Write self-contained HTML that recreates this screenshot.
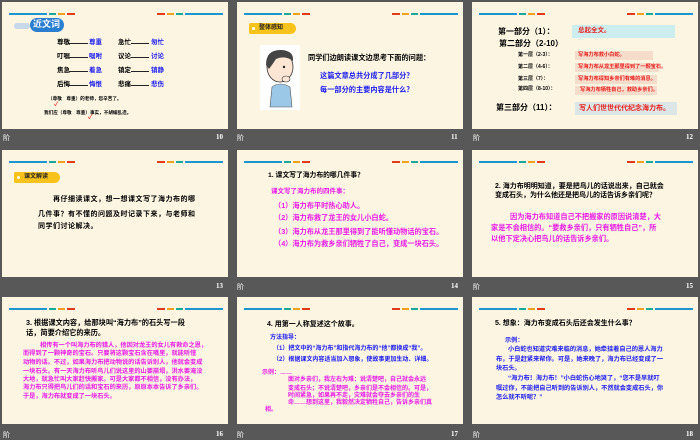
<!DOCTYPE html>
<html><head><meta charset="utf-8"><style>
*{margin:0;padding:0;box-sizing:border-box}
body{width:700px;height:438px;background:#585858;position:relative;overflow:hidden;font-family:"Liberation Sans","Noto Sans CJK SC",sans-serif}
.s{position:absolute;width:226px;height:127px;background:#fbf5e2;overflow:hidden}
.t{position:absolute;white-space:nowrap;font-weight:bold;line-height:1}
.l{position:absolute;height:1.6px;top:11px}
.n{position:absolute;color:#fff;font:bold 7px "Liberation Serif",serif}
.k{color:#1c1cf0}.m{color:#e81ae8}.r{color:#e82020}
.box{position:absolute}
.tag{position:absolute;background:#f7c21a;border-radius:2px 6px 6px 2px;font-size:6px;font-weight:bold;color:#222;padding-left:10px;line-height:11px}
.tag:before{content:"";position:absolute;left:3px;top:4px;width:3px;height:3px;border-radius:50%;background:#fff}
</style></head><body>

<!-- decorative lines template via repeated markup -->
<!-- Slide 10 -->
<div class="s" style="left:2px;top:2px">
<div class="l" style="left:7px;width:38px;background:#1d96d0"></div><div class="l" style="left:47px;width:7px;background:#1aa89a"></div><div class="l" style="left:56px;width:7px;background:#f0a020"></div><div class="l" style="left:65px;width:8px;background:#e03a1a"></div>
<div class="l" style="left:155px;width:8px;background:#e03a1a"></div><div class="l" style="left:165px;width:7px;background:#f0a020"></div><div class="l" style="left:174px;width:7px;background:#1aa89a"></div><div class="l" style="left:183px;width:38px;background:#1d96d0"></div>
<div class="box" style="left:12px;top:21px;width:16px;height:6px;background:#c8d8e8;border-radius:4px"></div>
<div class="box" style="left:28px;top:16px;width:34px;height:14px;background:#2a7ed0;border-radius:7px"></div>
<div class="t" style="left:31px;top:18px;font-size:9px;color:#fff">近文词</div>
<div class="t" style="left:55px;top:38px;font-size:6.5px">尊敬</div><div class="box" style="left:67px;top:41px;width:19px;height:0.8px;background:#222"></div><div class="t k" style="left:87px;top:38px;font-size:6.5px">尊重</div>
<div class="t" style="left:116px;top:38px;font-size:6.5px">急忙</div><div class="box" style="left:129px;top:41px;width:18px;height:0.8px;background:#222"></div><div class="t k" style="left:149px;top:38px;font-size:6.5px">匆忙</div>
<div class="t" style="left:55px;top:52px;font-size:6.5px">叮嘱</div><div class="box" style="left:67px;top:55px;width:19px;height:0.8px;background:#222"></div><div class="t k" style="left:87px;top:52px;font-size:6.5px">嘱咐</div>
<div class="t" style="left:116px;top:52px;font-size:6.5px">议论</div><div class="box" style="left:129px;top:55px;width:18px;height:0.8px;background:#222"></div><div class="t k" style="left:149px;top:52px;font-size:6.5px">讨论</div>
<div class="t" style="left:55px;top:66px;font-size:6.5px">焦急</div><div class="box" style="left:67px;top:69px;width:19px;height:0.8px;background:#222"></div><div class="t k" style="left:87px;top:66px;font-size:6.5px">着急</div>
<div class="t" style="left:116px;top:66px;font-size:6.5px">镇定</div><div class="box" style="left:129px;top:69px;width:18px;height:0.8px;background:#222"></div><div class="t k" style="left:149px;top:66px;font-size:6.5px">镇静</div>
<div class="t" style="left:55px;top:80px;font-size:6.5px">后悔</div><div class="box" style="left:67px;top:83px;width:19px;height:0.8px;background:#222"></div><div class="t k" style="left:87px;top:80px;font-size:6.5px">悔恨</div>
<div class="t" style="left:116px;top:80px;font-size:6.5px">悲痛</div><div class="box" style="left:129px;top:83px;width:18px;height:0.8px;background:#222"></div><div class="t k" style="left:149px;top:80px;font-size:6.5px">悲伤</div>
<div class="t" style="left:46px;top:95px;font-size:4.6px">（尊敬　尊重）的老师，您辛苦了。</div>
<div class="t" style="left:42px;top:109px;font-size:4.6px">我们应（尊敬　尊重）事实，不胡编乱造。</div>
<div class="t r" style="left:52px;top:100px;font-size:6px">✓</div><div class="t r" style="left:86px;top:113px;font-size:6px">✓</div>
</div>
<div class="n" style="left:3px;top:133px;font-weight:normal">阶</div><div class="n" style="left:216px;top:133px">10</div>

<!-- Slide 11 -->
<div class="s" style="left:237px;top:2px">
<div class="l" style="left:7px;width:38px;background:#1d96d0"></div><div class="l" style="left:47px;width:7px;background:#1aa89a"></div><div class="l" style="left:56px;width:7px;background:#f0a020"></div><div class="l" style="left:65px;width:8px;background:#e03a1a"></div>
<div class="l" style="left:155px;width:8px;background:#e03a1a"></div><div class="l" style="left:165px;width:7px;background:#f0a020"></div><div class="l" style="left:174px;width:7px;background:#1aa89a"></div><div class="l" style="left:183px;width:38px;background:#1d96d0"></div>
<div class="tag" style="left:12px;top:21px;width:47px;height:11px">整体感知</div>
<svg class="box" style="left:23px;top:43px" width="40" height="65" viewBox="0 0 40 65"><rect width="40" height="65" fill="#fff"/><ellipse cx="20" cy="22" rx="13" ry="15" fill="#fde7d4" stroke="#333" stroke-width=".8"/><path d="M6 20 Q6 4 22 5 Q34 6 33 16 Q25 10 16 14 Q12 20 9 24Z" fill="#444"/><circle cx="24" cy="22" r="1.2" fill="#222"/><path d="M10 62 L12 42 Q20 36 30 42 L32 62Z" fill="#9cc8e8" stroke="#555" stroke-width=".6"/><ellipse cx="26" cy="34" rx="4" ry="3" fill="#fde7d4" stroke="#333" stroke-width=".6"/></svg>
<div class="t" style="left:71px;top:52px;font-size:7.2px">同学们边朗读课文边思考下面的问题：</div>
<div class="t k" style="left:83px;top:70px;font-size:7.2px">这篇文章总共分成了几部分？</div>
<div class="t k" style="left:83px;top:84px;font-size:7.2px">每一部分的主要内容是什么？</div>
</div>
<div class="n" style="left:237px;top:133px;font-weight:normal">阶</div><div class="n" style="left:451px;top:133px">11</div>

<!-- Slide 12 -->
<div class="s" style="left:472px;top:2px">
<div class="l" style="left:7px;width:38px;background:#1d96d0"></div><div class="l" style="left:47px;width:7px;background:#1aa89a"></div><div class="l" style="left:56px;width:7px;background:#f0a020"></div><div class="l" style="left:65px;width:8px;background:#e03a1a"></div>
<div class="l" style="left:155px;width:8px;background:#e03a1a"></div><div class="l" style="left:165px;width:7px;background:#f0a020"></div><div class="l" style="left:174px;width:7px;background:#1aa89a"></div><div class="l" style="left:183px;width:38px;background:#1d96d0"></div>
<div class="t" style="left:26px;top:26px;font-size:8px">第一部分（1）：</div>
<div class="box" style="left:100px;top:23px;width:103px;height:13px;background:#cdeeee"></div>
<div class="t r" style="left:106px;top:26px;font-size:6.5px">总起全文。</div>
<div class="t" style="left:27px;top:38px;font-size:8px">第二部分（2-10）</div>
<div class="t" style="left:46px;top:51px;font-size:5px">第一层（2-3）：</div><div class="box" style="left:103px;top:49px;width:78px;height:9px;background:#f6dccb"></div><div class="t r" style="left:106px;top:51px;font-size:5.2px">写海力布救小白蛇。</div>
<div class="t" style="left:46px;top:63px;font-size:5px">第二层（4-6）：</div><div class="box" style="left:103px;top:61px;width:84px;height:9px;background:#f6dccb"></div><div class="t r" style="left:106px;top:63px;font-size:5.2px">写海力布从龙王那里得到了一颗宝石。</div>
<div class="t" style="left:46px;top:75px;font-size:5px">第三层（7）：</div><div class="box" style="left:103px;top:73px;width:82px;height:9px;background:#f6dccb"></div><div class="t r" style="left:106px;top:75px;font-size:5.2px">写海力布得知乡亲们有难的消息。</div>
<div class="t" style="left:46px;top:85px;font-size:5px">第四层（8-10）：</div><div class="box" style="left:103px;top:84px;width:82px;height:9px;background:#f6dccb"></div><div class="t r" style="left:108px;top:86px;font-size:5.2px">写海力布牺牲自己，救助乡亲们。</div>
<div class="t" style="left:24px;top:102px;font-size:8px">第三部分（11）：</div>
<div class="box" style="left:103px;top:100px;width:102px;height:13px;background:#dde6e6"></div>
<div class="t r" style="left:107px;top:103px;font-size:7px">写人们世世代代纪念海力布。</div>
</div>
<div class="n" style="left:473px;top:133px;font-weight:normal">阶</div><div class="n" style="left:686px;top:133px">12</div>

<!-- Slide 13 -->
<div class="s" style="left:2px;top:150px">
<div class="l" style="left:7px;width:38px;background:#1d96d0"></div><div class="l" style="left:47px;width:7px;background:#1aa89a"></div><div class="l" style="left:56px;width:7px;background:#f0a020"></div><div class="l" style="left:65px;width:8px;background:#e03a1a"></div>
<div class="l" style="left:155px;width:8px;background:#e03a1a"></div><div class="l" style="left:165px;width:7px;background:#f0a020"></div><div class="l" style="left:174px;width:7px;background:#1aa89a"></div><div class="l" style="left:183px;width:38px;background:#1d96d0"></div>
<div class="tag" style="left:12px;top:22px;width:46px;height:11px">课文解读</div>
<div class="t" style="left:51px;top:46px;font-size:7px;letter-spacing:.5px">再仔细读课文，想一想课文写了海力布的哪</div>
<div class="t" style="left:36px;top:61px;font-size:7px;letter-spacing:.5px">几件事？有不懂的问题及时记录下来，与老师和</div>
<div class="t" style="left:36px;top:73px;font-size:7px;letter-spacing:.5px">同学们讨论解决。</div>
</div>
<div class="n" style="left:216px;top:282px">13</div>

<!-- Slide 14 -->
<div class="s" style="left:237px;top:150px">
<div class="l" style="left:7px;width:38px;background:#1d96d0"></div><div class="l" style="left:47px;width:7px;background:#1aa89a"></div><div class="l" style="left:56px;width:7px;background:#f0a020"></div><div class="l" style="left:65px;width:8px;background:#e03a1a"></div>
<div class="l" style="left:155px;width:8px;background:#e03a1a"></div><div class="l" style="left:165px;width:7px;background:#f0a020"></div><div class="l" style="left:174px;width:7px;background:#1aa89a"></div><div class="l" style="left:183px;width:38px;background:#1d96d0"></div>
<div class="t" style="left:31px;top:23px;font-size:6.8px">1. 课文写了海力布的哪几件事？</div>
<div class="t m" style="left:34px;top:39px;font-size:6.5px">课文写了海力布的四件事：</div>
<div class="t m" style="left:37px;top:52px;font-size:7.2px">（1）海力布平时热心助人。</div>
<div class="t m" style="left:37px;top:64px;font-size:7.2px">（2）海力布救了龙王的女儿小白蛇。</div>
<div class="t m" style="left:37px;top:78px;font-size:7.2px">（3）海力布从龙王那里得到了能听懂动物话的宝石。</div>
<div class="t m" style="left:37px;top:90px;font-size:7.2px">（4）海力布为救乡亲们牺牲了自己，变成一块石头。</div>
</div>
<div class="n" style="left:237px;top:282px;font-weight:normal">阶</div><div class="n" style="left:451px;top:282px">14</div>

<!-- Slide 15 -->
<div class="s" style="left:472px;top:150px">
<div class="l" style="left:7px;width:38px;background:#1d96d0"></div><div class="l" style="left:47px;width:7px;background:#1aa89a"></div><div class="l" style="left:56px;width:7px;background:#f0a020"></div><div class="l" style="left:65px;width:8px;background:#e03a1a"></div>
<div class="l" style="left:155px;width:8px;background:#e03a1a"></div><div class="l" style="left:165px;width:7px;background:#f0a020"></div><div class="l" style="left:174px;width:7px;background:#1aa89a"></div><div class="l" style="left:183px;width:38px;background:#1d96d0"></div>
<div class="t" style="left:23px;top:33px;font-size:7px">2. 海力布明明知道，要是把鸟儿的话说出来，自己就会</div>
<div class="t" style="left:23px;top:42px;font-size:7px">变成石头，为什么他还是把鸟儿的话告诉乡亲们呢？</div>
<div class="t m" style="left:38px;top:63px;font-size:7.2px">因为海力布知道自己不把搬家的原因说清楚，大</div>
<div class="t m" style="left:19px;top:74px;font-size:7.2px">家是不会相信的。“要救乡亲们，只有牺牲自己”，所</div>
<div class="t m" style="left:19px;top:85px;font-size:7.2px">以他下定决心把鸟儿的话告诉乡亲们。</div>
</div>
<div class="n" style="left:473px;top:282px;font-weight:normal">阶</div><div class="n" style="left:686px;top:282px">15</div>

<!-- Slide 16 -->
<div class="s" style="left:2px;top:297px">
<div class="l" style="left:7px;width:38px;background:#1d96d0"></div><div class="l" style="left:47px;width:7px;background:#1aa89a"></div><div class="l" style="left:56px;width:7px;background:#f0a020"></div><div class="l" style="left:65px;width:8px;background:#e03a1a"></div>
<div class="l" style="left:155px;width:8px;background:#e03a1a"></div><div class="l" style="left:165px;width:7px;background:#f0a020"></div><div class="l" style="left:174px;width:7px;background:#1aa89a"></div><div class="l" style="left:183px;width:38px;background:#1d96d0"></div>
<div class="t" style="left:24px;top:22px;font-size:7.2px">3. 根据课文内容，给那块叫“海力布”的石头写一段</div>
<div class="t" style="left:24px;top:32px;font-size:7.2px">话，简要介绍它的来历。</div>
<div class="t m" style="left:38px;top:46px;font-size:6.2px">相传有一个叫海力布的猎人，他因对龙王的女儿有救命之恩，</div>
<div class="t m" style="left:21px;top:54px;font-size:6.2px">而得到了一颗神奇的宝石。只要将这颗宝石含在嘴里，就能听懂</div>
<div class="t m" style="left:21px;top:63px;font-size:6.2px">动物的话。不过，如果海力布把动物说的话告诉别人，他就会变成</div>
<div class="t m" style="left:21px;top:72px;font-size:6.2px">一块石头。有一天海力布听鸟儿们说这里的山要崩塌，洪水要淹没</div>
<div class="t m" style="left:21px;top:80px;font-size:6.2px">大地，就急忙叫大家赶快搬家。可是大家都不相信，没有办法，</div>
<div class="t m" style="left:21px;top:88px;font-size:6.2px">海力布只得把鸟儿们的话和宝石的来历，原原本本告诉了乡亲们。</div>
<div class="t m" style="left:21px;top:97px;font-size:6.2px">于是，海力布就变成了一块石头。</div>
</div>
<div class="n" style="left:3px;top:430px;font-weight:normal">阶</div><div class="n" style="left:216px;top:430px">16</div>

<!-- Slide 17 -->
<div class="s" style="left:237px;top:297px">
<div class="l" style="left:7px;width:38px;background:#1d96d0"></div><div class="l" style="left:47px;width:7px;background:#1aa89a"></div><div class="l" style="left:56px;width:7px;background:#f0a020"></div><div class="l" style="left:65px;width:8px;background:#e03a1a"></div>
<div class="l" style="left:155px;width:8px;background:#e03a1a"></div><div class="l" style="left:165px;width:7px;background:#f0a020"></div><div class="l" style="left:174px;width:7px;background:#1aa89a"></div><div class="l" style="left:183px;width:38px;background:#1d96d0"></div>
<div class="t" style="left:30px;top:24px;font-size:7px">4. 用第一人称复述这个故事。</div>
<div class="t k" style="left:33px;top:38px;font-size:6px">方法指导：</div>
<div class="t k" style="left:36px;top:49px;font-size:6px">（1）把文中的“海力布”和指代海力布的“他”都换成“我”。</div>
<div class="t k" style="left:36px;top:60px;font-size:6px">（2）根据课文内容适当加入想象，使故事更加生动、详细。</div>
<div class="t m" style="left:25px;top:73px;font-size:6px">示例：……</div>
<div class="t m" style="left:51px;top:80px;font-size:6px">面对乡亲们，我左右为难：说清楚吧，自己就会永远</div>
<div class="t m" style="left:51px;top:89px;font-size:6px">变成石头；不说清楚吧，乡亲们是不会相信的。可是，</div>
<div class="t m" style="left:51px;top:96px;font-size:6px">时间紧急，如果再不走，灾难就会夺去乡亲们的生</div>
<div class="t m" style="left:51px;top:103px;font-size:6px">命……想到这里，我毅然决定牺牲自己，告诉乡亲们真</div>
<div class="t m" style="left:28px;top:110px;font-size:6px">相。</div>
</div>
<div class="n" style="left:237px;top:430px;font-weight:normal">阶</div><div class="n" style="left:451px;top:430px">17</div>

<!-- Slide 18 -->
<div class="s" style="left:472px;top:297px">
<div class="l" style="left:7px;width:38px;background:#1d96d0"></div><div class="l" style="left:47px;width:7px;background:#1aa89a"></div><div class="l" style="left:56px;width:7px;background:#f0a020"></div><div class="l" style="left:65px;width:8px;background:#e03a1a"></div>
<div class="l" style="left:155px;width:8px;background:#e03a1a"></div><div class="l" style="left:165px;width:7px;background:#f0a020"></div><div class="l" style="left:174px;width:7px;background:#1aa89a"></div><div class="l" style="left:183px;width:38px;background:#1d96d0"></div>
<div class="t" style="left:23px;top:23px;font-size:7px">5. 想象：海力布变成石头后还会发生什么事？</div>
<div class="t k" style="left:33px;top:41px;font-size:6.2px">示例：</div>
<div class="t k" style="left:36px;top:50px;font-size:6.2px">小白蛇也知道灾难来临的消息，她牵挂着自己的恩人海力</div>
<div class="t k" style="left:24px;top:60px;font-size:6.2px">布，于是赶紧来帮你。可是，她来晚了，海力布已经变成了一</div>
<div class="t k" style="left:24px;top:69px;font-size:6.2px">块石头。</div>
<div class="t k" style="left:36px;top:79px;font-size:6.2px">“海力布！海力布！”小白蛇伤心地哭了，“您不是早就叮</div>
<div class="t k" style="left:24px;top:89px;font-size:6.2px">嘱过你，不能把自己听到的告诉别人，不然就会变成石头，你</div>
<div class="t k" style="left:24px;top:98px;font-size:6.2px">怎么就不听呢？”</div>
</div>
<div class="n" style="left:473px;top:430px;font-weight:normal">阶</div><div class="n" style="left:686px;top:430px">18</div>

</body></html>
